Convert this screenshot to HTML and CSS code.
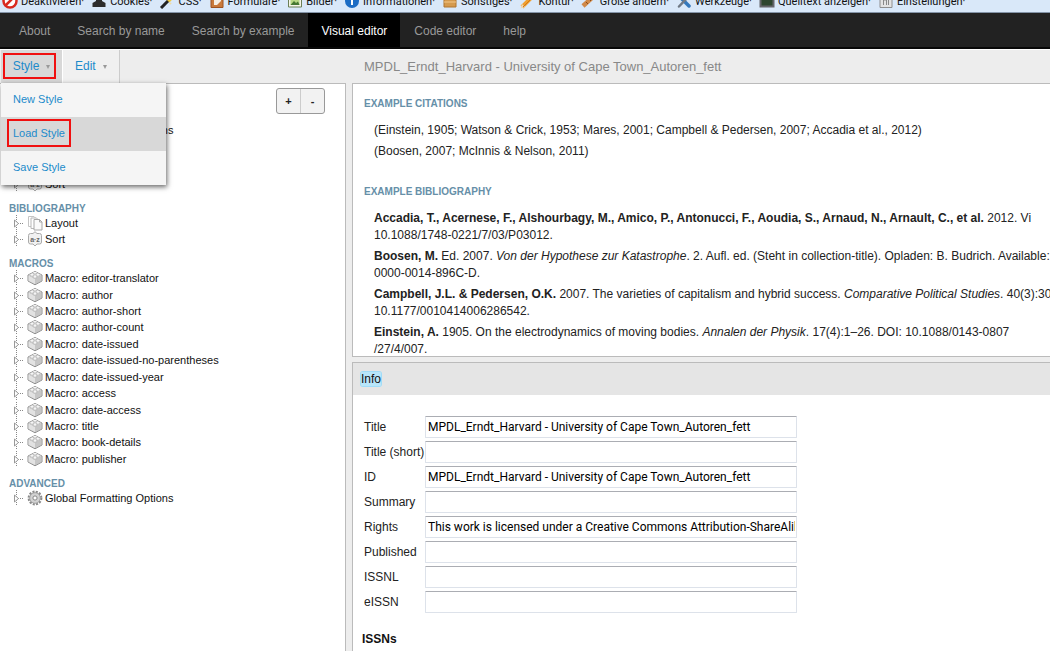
FILE: index.html
```html
<!DOCTYPE html>
<html lang="en">
<head>
<meta charset="utf-8">
<title>Visual editor</title>
<link rel="stylesheet" href="styles.css">
</head>
<body>
<svg width="0" height="0" class="defs" aria-hidden="true">
  <symbol id="twig" viewBox="0 0 9 16"><path d="M2.5 0V16M4 8.500H9" stroke="#888" stroke-dasharray="1 1" fill="none"/><path d="M.5 5L4.500 8.500L.5 12Z" fill="#fff" stroke="#999"/></symbol>
  <symbol id="brick" viewBox="0 0 16 16"><path d="M1 5L8 1.500L15 5V11L8 14.800L1 11Z" fill="#c9c9c9" stroke="#909090"/><path d="M1.500 5L8 2L14.500 5L8 8.500Z" fill="#f0f0f0"/><path d="M1.500 5.500L8 9V14L1.500 10.800Z" fill="#e2e2e2"/><path d="M8 9V14L14.500 10.800V5.500Z" fill="#c6c6c6"/><path d="M3 4.200v1.500q2 1.200 4 0V4.200M9 4.200v1.500q2 1.200 4 0V4.200M6 2v1.500q2 1.200 4 0V2M6 6.200v1.500q2 1.200 4 0V6.200" fill="#f6f6f6" stroke="#a4a4a4" stroke-width=".7"/></symbol>
  <symbol id="pages" viewBox="0 0 16 16"><path d="M1.500 1.500H7L9 3.500V11.500H1.500Z" fill="#fff" stroke="#c4c4c4"/><path d="M4 3H9.500L12 5.500V13.500H4Z" fill="#fff" stroke="#b8b8b8"/><path d="M7 4.500H12.500L15 7V15H7Z" fill="#fafafa" stroke="#a8a8a8"/><path d="M12.500 4.500V7H15" fill="none" stroke="#a8a8a8"/></symbol>
  <symbol id="sort" viewBox="0 0 16 16"><path d="M3.500 2.500H6L8 .7L10 2.500H12.500Q14.500 2.500 14.500 4.500V11Q14.500 13 12.500 13H10L8 15L6 13H3.500Q1.500 13 1.500 11V4.500Q1.500 2.500 3.500 2.500Z" fill="#f1f1f1" stroke="#aaa"/><text x="8" y="10.500" text-anchor="middle" class="az">a·z</text></symbol>
  <symbol id="gear" viewBox="0 0 16 16"><circle cx="8" cy="8" r="6.200" fill="none" stroke="#8a8a8a" stroke-width="2.400" stroke-dasharray="2 1.246"/><circle cx="8" cy="8" r="5.300" fill="#d2d2d2" stroke="#a4a4a4"/><circle cx="8" cy="8" r="2.100" fill="#fff" stroke="#888"/></symbol>
</svg>

<div class="devbar">
  <button><svg viewBox="0 0 16 16"><circle cx="8" cy="8" r="6.500" fill="#fff" stroke="#d92a20" stroke-width="2.500"/><path d="M3.500 12.500L12.500 3.500" stroke="#d92a20" stroke-width="2.500"/></svg>Deaktivieren·</button>
  <button><svg viewBox="0 0 16 16"><path d="M5 2h6v6l3.500 2v4h-13v-4L5 8Z" fill="#2c2c2c"/></svg>Cookies·</button>
  <button><svg viewBox="0 0 16 16"><path d="M2 15L10 7" stroke="#222" stroke-width="3"/><path d="M9 8L12 5" stroke="#f0c840" stroke-width="4"/><path d="M11 10l1 1" stroke="#eda" stroke-width="2"/></svg>CSS·</button>
  <button><svg viewBox="0 0 16 16"><path d="M2 1H14V14.500H2Z" fill="#c9793a" stroke="#9d5220"/><path d="M5 3H12V8L8 12H5Z" fill="#f6eee2"/></svg>Formulare·</button>
  <button><svg viewBox="0 0 16 16"><path d="M1.500 2H14.500V14H1.500Z" fill="#f4f4e8" stroke="#6b7f56"/><path d="M3.500 4H12.500V12H3.500Z" fill="#b8d885"/><path d="M3.500 12L7 8L9 10L11 8.500L12.500 12Z" fill="#467832"/></svg>Bilder·</button>
  <button><svg viewBox="0 0 16 16"><circle cx="8" cy="8" r="7" fill="#1c6cc4"/><path d="M8 7V12" stroke="#fff" stroke-width="2"/></svg>Informationen·</button>
  <button><svg viewBox="0 0 16 16"><path d="M2 3H14V14H2Z" fill="#d59a4e" stroke="#b0752e"/><path d="M2 9H14" stroke="#f3c88a"/></svg>Sonstiges·</button>
  <button><svg viewBox="0 0 16 16"><path d="M3 14L12 5" stroke="#f0a030" stroke-width="4"/><path d="M1.500 15.500L3 11L6 14Z" fill="#eed7b4"/><path d="M4 14L13 5" stroke="#d07818"/></svg>Kontur·</button>
  <button><svg viewBox="0 0 16 16"><path d="M2 13L13 3" stroke="#d08848" stroke-width="4.500"/><path d="M5 9L7 11M8 6L10 8" stroke="#8a4c1a"/></svg>Größe ändern·</button>
  <button><svg viewBox="0 0 16 16"><path d="M3 3L13 13" stroke="#3478bc" stroke-width="3.500" stroke-linecap="round"/><path d="M13 3L3 13.500" stroke="#707a86" stroke-width="2.500" stroke-linecap="round"/></svg>Werkzeuge·</button>
  <button><svg viewBox="0 0 16 16"><path d="M1.500 2H14.500V13.500H1.500Z" fill="#2e4630" stroke="#65656b" stroke-width="2"/></svg>Quelltext anzeigen·</button>
  <button><svg viewBox="0 0 16 16"><path d="M2 2H14V14.500H2Z" fill="#e3e3e3" stroke="#8e8e8e"/><path d="M5.500 12V7H8.500V12M10.500 4V12" stroke="#888" fill="none"/></svg>Einstellungen·</button>
</div>

<nav class="nav">
  <a href="#">About</a>
  <a href="#">Search by name</a>
  <a href="#">Search by example</a>
  <a href="#" class="current">Visual editor</a>
  <a href="#">Code editor</a>
  <a href="#">help</a>
</nav>

<header class="toolbar">
  <div class="menubar">
    <div class="menu-item">
      <button class="menu-button open"><span class="marked">Style<i class="caret"></i></span></button>
      <div class="dropdown">
        <a href="#">New Style</a>
        <a href="#" class="active"><span class="marked">Load Style</span></a>
        <a href="#">Save Style</a>
      </div>
    </div>
    <button class="menu-button">Edit<i class="caret"></i></button>
  </div>
  <h1 class="style-title">MPDL_Erndt_Harvard - University of Cape Town_Autoren_fett</h1>
</header>

<main class="workspace">
  <aside class="sidebar">
    <div class="tree">
      <ul class="branch general">
        <li><svg class="twig"><use href="#twig"/></svg><svg class="icon"><use href="#gear"/></svg>Global Formatting Options</li>
      </ul>
      <ul class="branch citations">
        <li><svg class="twig"><use href="#twig"/></svg><svg class="icon"><use href="#sort"/></svg>Sort</li>
      </ul>
      <h2>BIBLIOGRAPHY</h2>
      <ul class="branch">
        <li><svg class="twig"><use href="#twig"/></svg><svg class="icon"><use href="#pages"/></svg>Layout</li>
        <li><svg class="twig"><use href="#twig"/></svg><svg class="icon"><use href="#sort"/></svg>Sort</li>
      </ul>
      <h2>MACROS</h2>
      <ul class="branch macros">
        <li><svg class="twig"><use href="#twig"/></svg><svg class="icon"><use href="#brick"/></svg>Macro: editor-translator</li>
        <li><svg class="twig"><use href="#twig"/></svg><svg class="icon"><use href="#brick"/></svg>Macro: author</li>
        <li><svg class="twig"><use href="#twig"/></svg><svg class="icon"><use href="#brick"/></svg>Macro: author-short</li>
        <li><svg class="twig"><use href="#twig"/></svg><svg class="icon"><use href="#brick"/></svg>Macro: author-count</li>
        <li><svg class="twig"><use href="#twig"/></svg><svg class="icon"><use href="#brick"/></svg>Macro: date-issued</li>
        <li><svg class="twig"><use href="#twig"/></svg><svg class="icon"><use href="#brick"/></svg>Macro: date-issued-no-parentheses</li>
        <li><svg class="twig"><use href="#twig"/></svg><svg class="icon"><use href="#brick"/></svg>Macro: date-issued-year</li>
        <li><svg class="twig"><use href="#twig"/></svg><svg class="icon"><use href="#brick"/></svg>Macro: access</li>
        <li><svg class="twig"><use href="#twig"/></svg><svg class="icon"><use href="#brick"/></svg>Macro: date-access</li>
        <li><svg class="twig"><use href="#twig"/></svg><svg class="icon"><use href="#brick"/></svg>Macro: title</li>
        <li><svg class="twig"><use href="#twig"/></svg><svg class="icon"><use href="#brick"/></svg>Macro: book-details</li>
        <li><svg class="twig"><use href="#twig"/></svg><svg class="icon"><use href="#brick"/></svg>Macro: publisher</li>
      </ul>
      <h2>ADVANCED</h2>
      <ul class="branch">
        <li><svg class="twig"><use href="#twig"/></svg><svg class="icon"><use href="#gear"/></svg>Global Formatting Options</li>
      </ul>
    </div>
    <div class="node-buttons"><button>+</button><button>-</button></div>
  </aside>

  <div class="content">
    <section class="preview">
      <h2>EXAMPLE CITATIONS</h2>
      <p>(Einstein, 1905; Watson &amp; Crick, 1953; Mares, 2001; Campbell &amp; Pedersen, 2007; Accadia et al., 2012)</p>
      <p>(Boosen, 2007; McInnis &amp; Nelson, 2011)</p>
      <h2 class="second">EXAMPLE BIBLIOGRAPHY</h2>
      <p><b>Accadia, T., Acernese, F., Alshourbagy, M., Amico, P., Antonucci, F., Aoudia, S., Arnaud, N., Arnault, C., et al.</b> 2012. Vi<br>10.1088/1748-0221/7/03/P03012.</p>
      <p><b>Boosen, M.</b> Ed. 2007. <i>Von der Hypothese zur Katastrophe</i>. 2. Aufl. ed. (Steht in collection-title). Opladen: B. Budrich. Available:<br>0000-0014-896C-D.</p>
      <p><b>Campbell, J.L. &amp; Pedersen, O.K.</b> 2007. The varieties of capitalism and hybrid success. <i>Comparative Political Studies</i>. 40(3):30<br>10.1177/0010414006286542.</p>
      <p><b>Einstein, A.</b> 1905. On the electrodynamics of moving bodies. <i>Annalen der Physik</i>. 17(4):1–26. DOI: 10.1088/0143-0807<br>/27/4/007.</p>
    </section>
    <section class="properties">
      <div class="crumbs"><span>Info</span></div>
      <form class="fields">
        <label for="f-title">Title</label><input id="f-title" value="MPDL_Erndt_Harvard - University of Cape Town_Autoren_fett">
        <label for="f-short">Title (short)</label><input id="f-short">
        <label for="f-id">ID</label><input id="f-id" value="MPDL_Erndt_Harvard - University of Cape Town_Autoren_fett">
        <label for="f-summary">Summary</label><input id="f-summary">
        <label for="f-rights">Rights</label><input id="f-rights" value="This work is licensed under a Creative Commons Attribution-ShareAlik">
        <label for="f-published">Published</label><input id="f-published">
        <label for="f-issnl">ISSNL</label><input id="f-issnl">
        <label for="f-eissn">eISSN</label><input id="f-eissn">
      </form>
      <h3>ISSNs</h3>
    </section>
  </div>
</main>
</body>
</html>
```
FILE: styles.css
```css
* { box-sizing: border-box; }
html, body { height: 100%; }
body {
  margin: 0;
  display: flex;
  flex-direction: column;
  overflow: hidden;
  background: #ededed;
  color: #222;
  font: 12px/16px "Liberation Sans", Arial, sans-serif;
}
button, input { font: inherit; }
a { text-decoration: none; }
h1, h2, h3, p, ul { margin: 0; padding: 0; }
.defs { position: absolute; }

.devbar {
  flex: none;
  display: flex;
  align-items: flex-end;
  gap: 7px;
  height: 13px;
  padding-left: 2px;
  overflow: hidden;
  background: #d9e8f9;
  border-bottom: 1px solid #8494a8;
}
.devbar button {
  display: flex;
  align-items: center;
  gap: 3px;
  height: 20px;
  padding: 0;
  border: 0;
  background: none;
  color: #111;
  font: 11px/20px Roboto, sans-serif;
  white-space: nowrap;
}
.devbar svg { width: 16px; height: 16px; margin-bottom: 2px; }

.nav {
  flex: none;
  display: flex;
  gap: 1px;
  padding-left: 6px;
  background: #222;
  border-bottom: 2px solid #080808;
}
.nav a {
  padding: 2px 13px 0;
  color: #999;
  font-size: 12px;
  line-height: 32px;
}
.nav .current { background: #000; color: #fff; }

.toolbar {
  flex: none;
  display: flex;
  align-items: stretch;
  height: 34px;
  border-top: 1px solid #fff;
}
.menubar {
  display: flex;
  flex: 0 0 364px;
  padding-left: 1px;
}
.menu-item { position: relative; display: flex; }
.menu-button {
  padding: 0 12px 2px;
  border: 0;
  border-right: 1px solid #ccc;
  background: #f0f0f0;
  color: #1c8bcb;
}
.menu-button.open { width: 62px; padding: 0 0 2px 2px; background: #d8d8d8; border-color: #fff; }
.marked { border: 2px solid #f01010; }
.open .marked {
  display: block;
  width: 53px;
  padding: 3px 0 3px 4px;
}
.caret {
  display: inline-block;
  margin: 0 0 1px 7px;
  border: 2px solid transparent;
  border-top: 4px solid #999;
  border-bottom: 0;
}
.dropdown {
  position: absolute;
  z-index: 2;
  top: 100%;
  left: 0;
  width: 165px;
  background: #f5f5f5;
  box-shadow: 1px 2px 5px rgba(0, 0, 0, .6);
}
.dropdown a {
  display: flex;
  align-items: center;
  height: 34px;
  padding: 0 0 2px 12px;
  color: #1c8bcb;
}
.dropdown .active { padding-left: 6px; background: #d8d8d8; }
.dropdown .marked { padding: 4px; }
.menubar { font-size: 11px; }
.menu-button { font-size: 12px; }
.style-title {
  align-self: center;
  color: #888;
  font-size: 13px;
  font-weight: normal;
  white-space: nowrap;
}

.workspace {
  flex: 1;
  display: flex;
  gap: 6px;
  min-height: 0;
}
.sidebar {
  flex: 0 0 346px;
  display: flex;
  border: 1px solid #bbb;
  border-left: 0;
  border-bottom: 0;
  background: #fff;
}
.tree { flex: 1; padding: 38px 0 0 9px; color: #111; font-size: 11px; }
h2 { color: #668fa8; font-size: 10px; line-height: 14px; font-weight: bold; }
.tree h2 { line-height: 13px; }
.branch {
  display: grid;
  grid-auto-rows: 1fr;
  list-style: none;
  margin-bottom: 10px;
  padding-left: 5px;
}
.branch li { display: flex; align-items: center; min-height: 16px; }
.general { margin-bottom: 38px; }
.macros { min-height: 197px; }
.twig { width: 9px; height: 16px; margin-right: 4px; }
.icon { width: 16px; height: 16px; margin-right: 2px; }
.az { font: bold 7px "Liberation Sans", sans-serif; fill: #666; }
.node-buttons {
  align-self: flex-start;
  display: flex;
  width: 49px;
  height: 26px;
  margin: 4px 20px 0 0;
  border: 1px solid #999;
  border-radius: 3px;
  background: #f2f2f2;
}
.node-buttons button {
  flex: 1;
  padding: 0;
  border: 0;
  background: none;
  color: #222;
  font-size: 11px;
  font-weight: bold;
}
.node-buttons button + button { border-left: 1px solid #ccc; }

.content {
  flex: 1;
  display: flex;
  flex-direction: column;
  gap: 5px;
  min-width: 0;
}
.preview, .properties {
  border: 1px solid #bbb;
  border-right: 0;
  background: #fff;
}
.preview {
  flex: none;
  height: 274px;
  padding: 13px 0 0 11px;
  overflow: hidden;
  white-space: nowrap;
}
.preview p { margin: 0 0 4px 10px; line-height: 17px; }
.preview h2 { margin-bottom: 11px; }
.preview .second { margin-top: 25px; }
.properties { flex: 1; min-height: 0; overflow: hidden; border-bottom: 0; }
.crumbs { padding: 8px; background: #e5e5e5; }
.crumbs span { border-radius: 2px; background: #b8e6fa; box-shadow: 0 0 0 1px #a0dcf8; color: #111; }
.fields {
  display: grid;
  grid-template-columns: 61px 372px;
  row-gap: 3px;
  align-items: center;
  padding: 21px 0 0 11px;
}
.fields input {
  width: 100%;
  height: 22px;
  padding: 0 1px 0 2px;
  border: 1px solid #dde2ea;
  border-top-color: #abadb3;
  border-radius: 1px;
  color: #000;
  font-family: Roboto, sans-serif;
}
.fields label { white-space: nowrap; }
.properties h3 { padding: 18px 9px; color: #111; font-size: 12px; }
```
